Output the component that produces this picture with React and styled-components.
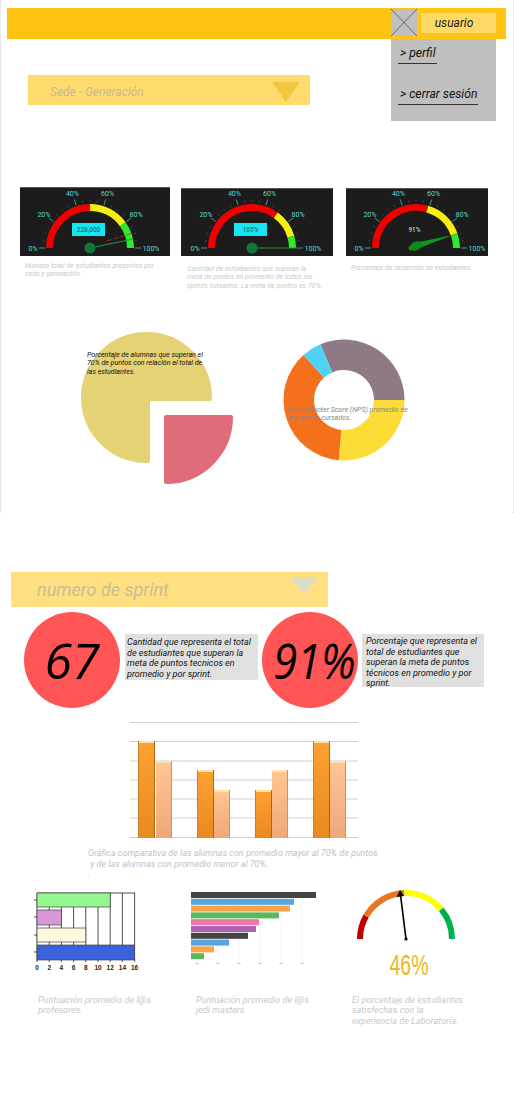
import React from 'react';
import styled, { createGlobalStyle } from 'styled-components';

const GlobalStyle = createGlobalStyle`
  body {
    margin: 0;
    background: #fff;
    font-family: Roboto, 'Liberation Sans', sans-serif;
  }
`;

const polar = (cx, cy, r, deg) => {
  const rad = (deg * Math.PI) / 180;
  return [cx + r * Math.cos(rad), cy - r * Math.sin(rad)];
};

const arcPath = (cx, cy, r, fromDeg, toDeg) => {
  const [x1, y1] = polar(cx, cy, r, fromDeg);
  const [x2, y2] = polar(cx, cy, r, toDeg);
  return `M${x1} ${y1} A${r} ${r} 0 0 1 ${x2} ${y2}`;
};

const pctToDeg = (pct) => 180 - pct * 1.8;

const Gauge = ({ width, height = 68, cx, stops, display, tip, thick, ghost }) => {
  const segments = [
    ['#f00000', 0, stops[0]],
    ['#f7ef10', stops[0], stops[1]],
    ['#2fe82f', stops[1], 100],
  ];
  const minor = Array.from({ length: 21 }, (_, i) => i * 5);
  const labels = [0, 20, 40, 60, 80, 100];
  return (
    <svg width={width} height={height} viewBox={`0 ${68 - height} ${width} ${height}`}>
      <rect y={68 - height} width={width} height={height} fill="#1c1c1c" />
      <rect y={68 - height} width={width} height="1" fill="#555" />
      {minor.map((p) => {
        const major = p % 20 === 0;
        const [x1, y1] = polar(cx, 60, major ? 45 : 46, pctToDeg(p));
        const [x2, y2] = polar(cx, 60, major ? 51 : 48, pctToDeg(p));
        return (
          <line
            key={p}
            x1={x1}
            y1={y1}
            x2={x2}
            y2={y2}
            stroke={major ? '#54cfc8' : '#4f5c4f'}
            strokeWidth="0.7"
          />
        );
      })}
      {segments.map(([color, from, to]) => (
        <path
          key={color}
          d={arcPath(cx, 60, 40.5, pctToDeg(from), pctToDeg(to))}
          fill="none"
          stroke={color}
          strokeWidth="7"
        />
      ))}
      {labels.map((p) => {
        const r = p === 100 ? 61 : 57;
        const [x, y] = polar(cx, 60, r, pctToDeg(p));
        return (
          <GaugeLabel key={p} x={x} y={y + 2.5} textAnchor="middle">
            {p}%
          </GaugeLabel>
        );
      })}
      {display.box && (
        <rect x={cx - 18} y="35" width="33" height="13" fill="#16e6f2" />
      )}
      <GaugeValue x={cx - 1.5} y="44" textAnchor="middle" $light={!display.box}>
        {display.text}
      </GaugeValue>
      {ghost && (
        <line
          x1={ghost[0]}
          y1={ghost[1]}
          x2={ghost[2]}
          y2={ghost[3]}
          stroke="#d02020"
          strokeWidth="0.8"
          strokeDasharray="5 2"
        />
      )}
      {thick ? (
        <>
          <polygon
            points={`${cx - 2} 55 ${tip[0]} ${tip[1]} ${cx + 3} 60`}
            fill="#0b9a1d"
          />
          <ellipse
            cx={cx}
            cy="58"
            rx="6"
            ry="4.5"
            transform={`rotate(-25 ${cx} 58)`}
            fill="#0b8a1b"
          />
          <circle cx={cx - 5} cy="60" r="2.5" fill="#0b8a1b" />
        </>
      ) : (
        <>
          <line
            x1={cx}
            y1="60"
            x2={tip[0]}
            y2={tip[1]}
            stroke="#1f9a45"
            strokeWidth="1"
          />
          <circle cx={cx} cy="60" r="5.5" fill="#12763a" />
        </>
      )}
    </svg>
  );
};

const Pie = () => (
  <svg width="160" height="156" viewBox="0 0 160 156">
    <path
      d="M129 67 A63.5 63.5 0 1 0 67 129 L67 67 Z"
      fill="#e5d274"
      stroke="#e5d274"
      strokeWidth="4"
      strokeLinejoin="round"
    />
    <path
      d="M85 85 L150 85 A65 65 0 0 1 85 150 Z"
      fill="#e06c7b"
      stroke="#e06c7b"
      strokeWidth="4"
      strokeLinejoin="round"
    />
  </svg>
);

const donutSegment = (c, outer, inner, from, to) => {
  const point = (r, deg) => {
    const rad = ((deg - 90) * Math.PI) / 180;
    return `${c + r * Math.cos(rad)} ${c + r * Math.sin(rad)}`;
  };
  const span = (to - from + 360) % 360;
  const large = span > 180 ? 1 : 0;
  return `M${point(outer, from)} A${outer} ${outer} 0 ${large} 1 ${point(outer, to)} L${point(inner, to)} A${inner} ${inner} 0 ${large} 0 ${point(inner, from)} Z`;
};

const donutData = [
  { color: '#8e7a85', from: 337, to: 90 },
  { color: '#fbdd35', from: 90, to: 185 },
  { color: '#f4701c', from: 185, to: 318 },
  { color: '#4fd2f5', from: 318, to: 337 },
];

const Donut = () => (
  <svg width="122" height="122" viewBox="0 0 122 122">
    {donutData.map((s) => (
      <path
        key={s.color}
        d={donutSegment(61, 60.5, 30, s.from, s.to)}
        fill={s.color}
      />
    ))}
  </svg>
);

const columns = [
  { x: 8, w: 17, h: 97, light: false },
  { x: 26, w: 16, h: 77, light: true },
  { x: 67, w: 17, h: 68, light: false },
  { x: 84, w: 16, h: 48, light: true },
  { x: 125, w: 17, h: 48, light: false },
  { x: 142, w: 16, h: 68, light: true },
  { x: 183, w: 17, h: 97, light: false },
  { x: 200, w: 16, h: 77, light: true },
];

const BarChart = () => (
  <svg width="228" height="117" viewBox="0 0 228 117">
    <defs>
      <linearGradient id="darkBar" x1="0" x2="0" y1="0" y2="1">
        <stop offset="0" stopColor="#ffa033" />
        <stop offset="1" stopColor="#e98a20" />
      </linearGradient>
      <linearGradient id="lightBar" x1="0" x2="0" y1="0" y2="1">
        <stop offset="0" stopColor="#ffc694" />
        <stop offset="1" stopColor="#efa878" />
      </linearGradient>
    </defs>
    {[0.5, 19.5, 39, 58, 77, 96, 115.5].map((y) => (
      <line key={y} x1="0" x2="228" y1={y} y2={y} stroke="#cfcfcf" strokeWidth="1" />
    ))}
    {columns.map((c) => (
      <g key={c.x}>
        <rect
          x={c.x}
          y={116 - c.h}
          width={c.w}
          height={c.h}
          fill={c.light ? 'url(#lightBar)' : 'url(#darkBar)'}
        />
        <rect x={c.x} y={116 - c.h} width={c.w} height="2" fill="#ffe0a8" />
        <rect
          x={c.x + c.w - 1}
          y={116 - c.h}
          width="1"
          height={c.h}
          fill={c.light ? '#c8946c' : '#a9651a'}
        />
        {!c.light && <rect x={c.x} y={116 - c.h} width="1" height={c.h} fill="#c4801f" />}
      </g>
    ))}
  </svg>
);

const teacherBars = [
  { y: 2, h: 14, value: 12, color: '#92f78f' },
  { y: 19, h: 15, value: 4, color: '#d898d8' },
  { y: 37, h: 14, value: 8, color: '#fff8dc' },
  { y: 54, h: 15, value: 16, color: '#3b62db' },
];

const TeacherChart = () => {
  const unit = 6.1;
  const ticks = [0, 2, 4, 6, 8, 10, 12, 14, 16];
  return (
    <svg width="112" height="84" viewBox="0 0 112 84">
      {ticks.map((t) => (
        <g key={t}>
          <line
            x1={7 + t * unit}
            x2={7 + t * unit}
            y1="2"
            y2="71"
            stroke="#222"
            strokeWidth="0.8"
          />
          <ChartTick x={7 + t * unit} y="79" textAnchor="middle">
            {t}
          </ChartTick>
        </g>
      ))}
      <line x1="7" x2="105" y1="2" y2="2" stroke="#222" strokeWidth="0.8" />
      {[9, 26, 44, 61].map((y) => (
        <line key={y} x1="4" x2="7" y1={y} y2={y} stroke="#222" strokeWidth="0.8" />
      ))}
      {teacherBars.map((b) => (
        <rect
          key={b.y}
          x="7"
          y={b.y}
          width={b.value * unit}
          height={b.h}
          fill={b.color}
          stroke="#444"
          strokeWidth="0.7"
        />
      ))}
    </svg>
  );
};

const jediBars = [
  [125, '#444444'],
  [103, '#57a5e0'],
  [99, '#f8a54a'],
  [88, '#5cb85c'],
  [68, '#e878a8'],
  [65, '#b060b0'],
  [57, '#444444'],
  [38, '#57a5e0'],
  [23, '#f8a54a'],
  [13, '#5cb85c'],
];

const JediChart = () => (
  <svg width="128" height="76" viewBox="0 0 128 76">
    {[7, 28, 49, 70, 91, 112].map((x) => (
      <g key={x}>
        <line x1={x} x2={x} y1="1" y2="69" stroke="#ececec" strokeWidth="0.7" />
        <rect x={x - 1.5} y="72" width="3" height="1" fill="#bbb" />
      </g>
    ))}
    {jediBars.map(([w, color], i) => (
      <rect key={i} x="1" y={1 + i * 6.8} width={w} height="6" fill={color} />
    ))}
  </svg>
);

const SatisfactionGauge = () => (
  <PulledSvg width="104" height="54" viewBox="0 0 104 54">
    {[
      ['#c00000', 180, 150],
      ['#e87722', 150, 92],
      ['#ffff00', 92, 40],
      ['#00b050', 40, 0],
    ].map(([color, from, to]) => (
      <path
        key={color}
        d={arcPath(52, 50, 46, from, to)}
        fill="none"
        stroke={color}
        strokeWidth="6"
      />
    ))}
    <line x1="52" y1="50" x2="46.5" y2="6" stroke="#000" strokeWidth="1.6" />
    <polygon points="46,1 42.5,8 50,7" fill="#000" />
    <circle cx="52" cy="50" r="1.6" fill="#000" />
  </PulledSvg>
);

const App = () => (
  <>
    <GlobalStyle />
    <TopFrame>
      <Header>
        <Avatar>
          <svg width="26" height="27" viewBox="0 0 26 27">
            <path d="M0 0 L26 27 M26 0 L0 27" stroke="#444" strokeWidth="0.7" />
          </svg>
        </Avatar>
        <UserButton>usuario</UserButton>
        <UserMenu>
          <MenuLink>&gt; perfil</MenuLink>
          <MenuLink>&gt; cerrar sesión</MenuLink>
        </UserMenu>
      </Header>

      <SedeSelect>
        <span>Sede - Generación</span>
        <Triangle $w={14} $h={20} $color="#f0c73f" />
      </SedeSelect>

      <GaugeRow>
        <GaugeCard $width={150}>
          <Gauge
            width={150}
            height={69}
            cx={70}
            stops={[50, 80]}
            display={{ box: true, text: '228,000' }}
            tip={[113, 51]}
            ghost={[87, 53, 113, 45]}
          />
          <Caption $top={6} $left={5}>
            Número total de estudiantes presentes por
            <br />
            sede y generación.
          </Caption>
        </GaugeCard>
        <GaugeCard $width={152} $top={1}>
          <Gauge
            width={152}
            cx={71}
            stops={[70, 91]}
            display={{ box: true, text: '105%' }}
            tip={[116, 60]}
          />
          <Caption $top={9} $left={6}>
            Cantidad de estudiantes que superan la
            <br />
            meta de puntos en promedio de todos los
            <br />
            sprints cursados. La meta de puntos es 70%.
          </Caption>
        </GaugeCard>
        <GaugeCard $width={142} $top={1} $gap={2}>
          <Gauge
            width={142}
            cx={70}
            stops={[59, 89]}
            display={{ box: false, text: '91%' }}
            tip={[107, 47]}
            thick
          />
          <Caption $top={8} $left={5}>
            Porcentaje de deserción de estudiantes.
          </Caption>
        </GaugeCard>
      </GaugeRow>

      <ChartsRow>
        <ChartBlock>
          <Pie />
          <PieNote>
            Porcentaje de alumnas que superan el 70% de puntos con relación al total de las
            estudiantes.
          </PieNote>
        </ChartBlock>
        <ChartBlock>
          <Donut />
          <DonutNote>Net Promoter Score (NPS) promedio de los sprints cursados.</DonutNote>
        </ChartBlock>
      </ChartsRow>
    </TopFrame>

    <SprintSelect>
      <span>numero de sprint</span>
      <Triangle $w={14} $h={18} $color="#dedcc4" />
    </SprintSelect>

    <StatsRow>
      <Stat $width={238}>
        <StatCircle>
          <span>67</span>
        </StatCircle>
        <StatNote $width={133} $height={46} $padTop={3} $padLeft={2}>
          Cantidad que representa el total de estudiantes que superan la meta de puntos tecnicos en
          promedio y por sprint.
        </StatNote>
      </Stat>
      <Stat $width={222}>
        <StatCircle>
          <SqueezedValue>91%</SqueezedValue>
        </StatCircle>
        <StatNote $width={122} $height={53} $shift={-1} $padTop={2} $padLeft={4}>
          Porcentaje que representa el total de estudiantes que superan la meta de puntos técnicos
          en promedio y por sprint.
        </StatNote>
      </Stat>
    </StatsRow>

    <BarChartWrap>
      <BarChart />
    </BarChartWrap>

    <BarCaption>
      Gráfica comparativa de las alumnas con promedio mayor al 70% de puntos
      <br />
      &nbsp;y de las alumnas con promedio menor al 70%.
      <br />.
    </BarCaption>

    <BottomRow>
      <BottomCol $left={30}>
        <ChartSlot>
          <TeacherChart />
        </ChartSlot>
        <BottomCaption $left={8} $width={125}>
          Puntuación promedio de l@s profesores.
        </BottomCaption>
      </BottomCol>
      <BottomCol $left={40}>
        <ChartSlot>
          <JediChart />
        </ChartSlot>
        <BottomCaption $left={6} $width={125}>
          Puntuación promedio de l@s jedi masters.
        </BottomCaption>
      </BottomCol>
      <BottomCol $left={44}>
        <ChartSlot>
          <SatisfactionGauge />
          <BigPercent>46%</BigPercent>
        </ChartSlot>
        <BottomCaption $left={-2} $width={113}>
          El porcentaje de estudiantes satisfechas con la experiencia de Laboratoría.
        </BottomCaption>
      </BottomCol>
    </BottomRow>
  </>
);

export default App;

const TopFrame = styled.div`
  box-sizing: border-box;
  height: 513px;
  padding-top: 8px;
  border-left: 1px solid #e8e8e8;
  border-right: 1px solid #e8e8e8;
`;

const Header = styled.header`
  position: relative;
  box-sizing: border-box;
  display: flex;
  align-items: flex-start;
  height: 31px;
  margin: 0 7px 0 6px;
  padding: 1px 0 0 384px;
  background: #ffc413;
`;

const Avatar = styled.div`
  width: 26px;
  height: 27px;
  background: #bfbfbf;
  svg {
    display: block;
  }
`;

const UserButton = styled.div`
  box-sizing: border-box;
  width: 75px;
  height: 20px;
  margin: 4px 0 0 4px;
  padding-right: 9px;
  background: #ffd966;
  color: #1a1a1a;
  font-size: 12px;
  font-style: italic;
  line-height: 20px;
  text-align: center;
`;

const UserMenu = styled.nav`
  position: absolute;
  top: 31px;
  left: 384px;
  box-sizing: border-box;
  display: flex;
  flex-direction: column;
  align-items: flex-start;
  gap: 23px;
  width: 105px;
  height: 82px;
  padding: 7px 0 0 7px;
  background: #bfbfbf;
`;

const MenuLink = styled.a`
  padding: 0 1px 2px 2px;
  border-bottom: 1px solid #333;
  color: #111;
  font-size: 12.2px;
  font-style: italic;
  line-height: 15px;
`;

const Triangle = styled.i`
  width: 0;
  height: 0;
  border-left: ${(p) => p.$w}px solid transparent;
  border-right: ${(p) => p.$w}px solid transparent;
  border-top: ${(p) => p.$h}px solid ${(p) => p.$color};
`;

const SedeSelect = styled.div`
  box-sizing: border-box;
  display: flex;
  align-items: center;
  justify-content: space-between;
  width: 282px;
  height: 30px;
  margin: 36px 0 0 27px;
  padding: 4px 10px 0 22px;
  background: #ffdb6e;
  color: #c4bd93;
  font-size: 12px;
  font-style: italic;
`;

const GaugeRow = styled.div`
  display: flex;
  align-items: flex-start;
  gap: 11px;
  height: 145px;
  margin: 82px 0 0 19px;
`;

const GaugeCard = styled.div`
  width: ${(p) => p.$width}px;
  margin-top: ${(p) => p.$top || 0}px;
  margin-left: ${(p) => p.$gap || 0}px;
  svg {
    display: block;
  }
`;

const GaugeLabel = styled.text`
  fill: #5fd5d0;
  font-family: Roboto, sans-serif;
  font-size: 7px;
`;

const GaugeValue = styled.text`
  fill: ${(p) => (p.$light ? '#9fdcd8' : '#1b6f74')};
  font-family: Roboto, sans-serif;
  font-size: 6.5px;
  font-weight: 500;
`;

const Caption = styled.p`
  margin: ${(p) => p.$top}px 0 0 ${(p) => p.$left}px;
  color: #c9c9c9;
  font-size: 7px;
  font-style: italic;
  line-height: 8.4px;
  white-space: nowrap;
`;

const ChartsRow = styled.div`
  display: flex;
  align-items: flex-start;
  gap: 42px;
  margin-left: 80px;
`;

const ChartBlock = styled.div`
  position: relative;
  &:last-child {
    margin-top: 7px;
  }
  svg {
    display: block;
  }
`;

const PieNote = styled.p`
  position: absolute;
  top: 19px;
  left: 6px;
  width: 120px;
  margin: 0;
  color: #111;
  font-size: 7.05px;
  font-style: italic;
  line-height: 8.3px;
`;

const DonutNote = styled.p`
  position: absolute;
  top: 67px;
  left: 5px;
  width: 125px;
  margin: 0;
  color: #888;
  font-size: 7.05px;
  font-style: italic;
  line-height: 8.3px;
`;

const SprintSelect = styled.div`
  box-sizing: border-box;
  display: flex;
  align-items: center;
  justify-content: space-between;
  width: 317px;
  height: 35px;
  margin: 59px 0 0 11px;
  padding: 0 10px 0 26px;
  background: #ffdf80;
  color: #c7c094;
  font-size: 18px;
  font-style: italic;
  i {
    margin-bottom: 8px;
  }
`;

const StatsRow = styled.div`
  display: flex;
  align-items: flex-start;
  margin: 5px 0 0 24px;
`;

const Stat = styled.div`
  display: flex;
  align-items: flex-start;
  gap: 5px;
  width: ${(p) => p.$width}px;
`;

const StatCircle = styled.div`
  flex: none;
  display: flex;
  align-items: center;
  justify-content: center;
  width: 96px;
  height: 96px;
  border-radius: 50%;
  background: #ff5555;
  color: #000;
  font-family: 'Open Sans', sans-serif;
  font-size: 50px;
  font-style: italic;
`;

const SqueezedValue = styled.span`
  transform: translateX(4px) scaleX(0.87);
  white-space: nowrap;
`;

const StatNote = styled.p`
  box-sizing: border-box;
  flex: none;
  width: ${(p) => p.$width}px;
  height: ${(p) => p.$height}px;
  margin: 22px 0 0 ${(p) => p.$shift || 0}px;
  padding: ${(p) => p.$padTop}px 2px 0 ${(p) => p.$padLeft}px;
  background: #e0e0e0;
  color: #111;
  font-size: 9px;
  font-style: italic;
  line-height: 10.6px;
`;

const BarChartWrap = styled.div`
  margin: 14px 0 0 130px;
  svg {
    display: block;
  }
`;

const BarCaption = styled.p`
  margin: 9px 0 0 88px;
  color: #c2c2c2;
  font-size: 9px;
  font-style: italic;
  line-height: 10.5px;
`;

const BottomRow = styled.div`
  display: flex;
  margin-top: 11px;
`;

const BottomCol = styled.div`
  flex: none;
  width: 120px;
  margin-left: ${(p) => p.$left}px;
`;

const ChartSlot = styled.div`
  display: flex;
  flex-direction: column;
  align-items: flex-start;
  height: 104px;
  svg {
    display: block;
  }
`;

const PulledSvg = styled.svg`
  margin-top: -2px;
`;

const BigPercent = styled.div`
  width: 104px;
  margin-top: 7px;
  color: #e8b923;
  font-family: 'Liberation Sans', sans-serif;
  font-size: 30px;
  line-height: 30px;
  text-align: center;
  transform: translateX(3px) scaleX(0.65);
`;

const BottomCaption = styled.p`
  width: ${(p) => p.$width}px;
  margin: 0 0 0 ${(p) => p.$left}px;
  color: #c8c8c8;
  font-size: 9px;
  font-style: italic;
  letter-spacing: 0.05px;
  line-height: 10.8px;
`;

const ChartTick = styled.text`
  fill: #222;
  font-family: 'Liberation Sans', sans-serif;
  font-size: 6.5px;
  font-weight: 700;
`;
